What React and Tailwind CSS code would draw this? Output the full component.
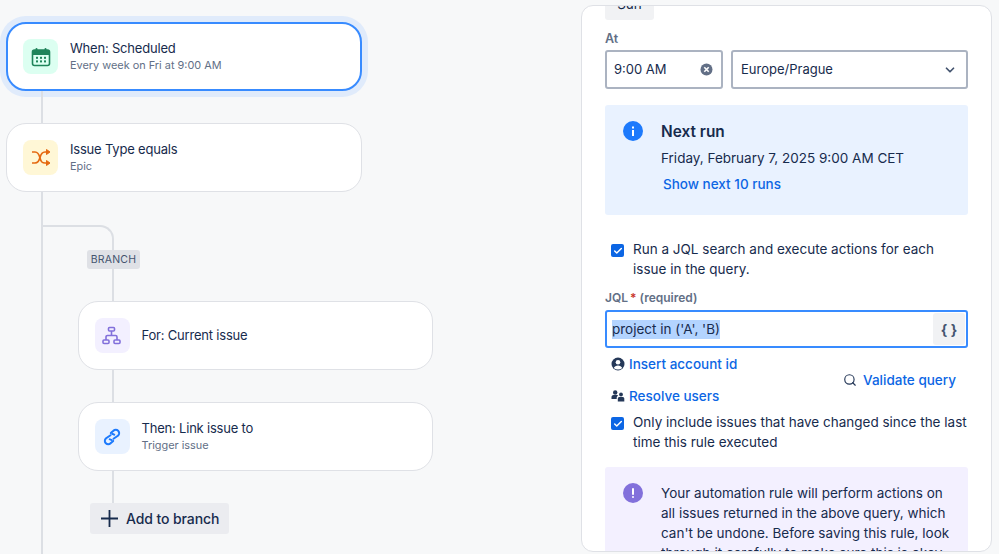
import { Check, ChevronDown, Search } from "lucide-react";

const CalendarIcon = () => (
  <svg width="20" height="20" viewBox="0 0 20 20" fill="none">
    <rect x="1.500" y="3" width="17" height="15.500" rx="2" stroke="#1f845a" strokeWidth="1.600" fill="none" />
    <path d="M1.500 5a2 2 0 0 1 2-2h13a2 2 0 0 1 2 2v3h-17z" fill="#1f845a" />
    <rect x="4.500" y="1" width="2" height="3" rx="1" fill="#1f845a" />
    <rect x="13.500" y="1" width="2" height="3" rx="1" fill="#1f845a" />
    {[5, 9, 13].map((x) => (
      <g key={x}>
        <rect x={x} y="9.800" width="2" height="2" fill="#1f845a" />
        <rect x={x} y="13.400" width="2" height="2" fill="#1f845a" />
      </g>
    ))}
  </svg>
);

const ShuffleIcon = () => (
  <svg width="20" height="20" viewBox="0 0 20 20" fill="none" stroke="#e56910" strokeWidth="1.700">
    <path d="M1 4h3c3 0 4 2 5 6s2 5 5 5h2" />
    <path d="M1 15h3c3 0 4-1.500 5-5.500s2-5.500 5-5.500h2" />
    <path d="M15.500 1.500 19 4l-3.500 2.500zM15.500 12.500 19 15l-3.500 2.500z" fill="#e56910" strokeWidth="1" />
  </svg>
);

const NetworkIcon = () => (
  <svg width="20" height="20" viewBox="0 0 20 20" fill="none" stroke="#8270db" strokeWidth="1.600">
    <rect x="6.500" y="1.500" width="6" height="3.500" rx="1" />
    <rect x="1" y="14" width="6" height="3.500" rx="1" />
    <rect x="12" y="14" width="6" height="3.500" rx="1" />
    <path d="M9.500 5v4.500M4 14v-3a1.500 1.500 0 0 1 1.500-1.500h8a1.500 1.500 0 0 1 1.500 1.500v3" />
  </svg>
);

const LinkIcon = () => (
  <svg width="20" height="20" viewBox="0 0 20 20" fill="none" stroke="#1d7afc" strokeWidth="2" strokeLinecap="round">
    <path d="M8.500 8.200 3.800 11.500a3.300 3.300 0 0 0 4.800 4.700l2.600-2.300" />
    <path d="M11.500 11.800l4.700-3.300a3.300 3.300 0 0 0-4.800-4.700L8.800 6.100" />
    <path d="M7.700 12.300a2.800 2.800 0 0 0 2 .6M12.300 7.700a2.800 2.800 0 0 0-2-.6" />
  </svg>
);

const UserIcon = () => (
  <svg width="14" height="14" viewBox="0 0 14 14">
    <circle cx="7" cy="7" r="6.500" fill="#253858" />
    <circle cx="7" cy="5.300" r="2.300" fill="#fff" />
    <path d="M2.800 11c.6-1.800 2.300-2.600 4.200-2.600s3.600.8 4.200 2.600A6 6 0 0 1 7 12.500 6 6 0 0 1 2.800 11z" fill="#fff" />
  </svg>
);

const UsersIcon = () => (
  <svg width="14" height="14" viewBox="0 0 14 14" fill="#253858">
    <circle cx="4.200" cy="3.500" r="2.200" />
    <circle cx="10" cy="5.500" r="1.900" />
    <path d="M.5 10V8c0-1.200 1-2 2-2h3.400c.6 0 1 .2 1.400.6C6.300 7 5.700 8 5.700 9v1z" />
    <path d="M6.800 12.500V9.800c0-1 .8-1.700 1.700-1.700h3c1 0 1.800.7 1.800 1.700v2.700z" />
  </svg>
);

const CheckBox = () => (
  <span className="flex h-[13px] w-[13px] shrink-0 items-center justify-center rounded-[2px] bg-[#0c66e4]">
    <Check size={10} strokeWidth={3.500} className="text-white" />
  </span>
);

const Card = ({ bg, icon, title, sub, active, className = "" }) => (
  <div
    className={`flex h-[69px] items-center gap-[12px] rounded-[20px] bg-white ${
      active ? "border-2 border-[#388bff] pl-[15px] shadow-[0_0_0_6px_#e0ebfb]" : "border border-[#dfe1e6] pl-[16px]"
    } ${className}`}
  >
    <div className={`flex h-[35px] w-[35px] items-center justify-center rounded-[8px] ${bg}`}>{icon}</div>
    <div className="mb-[2px]">
      <div className="text-[13px] leading-[18px] tracking-[-0.2px] text-[#172b4d]">{title}</div>
      {sub && <div className="text-[10.900px] leading-[16px] text-[#626f86]">{sub}</div>}
    </div>
  </div>
);

const Flow = () => (
  <div className="w-[581px] shrink-0 pl-[6px] pt-[22px]">
    <Card active className="w-[356px]" bg="bg-[#dcfff1]" icon={<CalendarIcon />} title="When: Scheduled" sub="Every week on Fri at 9:00 AM" />
    <div className="ml-[35px] h-[32px] w-[2px] bg-[#dcdfe4]" />
    <Card className="w-[356px]" bg="bg-[#fff7d6]" icon={<ShuffleIcon />} title="Issue Type equals" sub="Epic" />
    <div className="ml-[35px] h-[363px] border-l-2 border-[#dcdfe4] pt-[33px]">
      <div className="h-[25px] w-[71px] rounded-tr-[14px] border-r-2 border-t-2 border-[#dcdfe4]" />
      <div className="ml-[44px] flex h-[19px] w-[53px] items-center justify-center rounded-[3px] bg-[#dfe1e6] text-[10.500px] tracking-[0.2px] text-[#44546f]">
        BRANCH
      </div>
      <div className="ml-[69px] h-[32px] w-[2px] bg-[#dcdfe4]" />
      <Card className="ml-[34.500px] w-[355.500px]" bg="bg-[#f3f0ff]" icon={<NetworkIcon />} title="For: Current issue" />
      <div className="ml-[69px] h-[32px] w-[2px] bg-[#dcdfe4]" />
      <Card className="ml-[34.500px] w-[355.500px]" bg="bg-[#e9f2ff]" icon={<LinkIcon />} title="Then: Link issue to" sub="Trigger issue" />
      <div className="ml-[69px] h-[32px] w-[2px] bg-[#dcdfe4]" />
      <div className="ml-[47px] flex h-[31px] w-[139px] items-center gap-[8px] rounded-[3px] bg-[#ebecf0] pl-[11px] text-[14px] font-medium tracking-[-0.1px] text-[#172b4d]">
        <svg width="17" height="17" viewBox="0 0 17 17" stroke="#172b4d" strokeWidth="1.800">
          <path d="M8.500 0v17M0 8.500h17" />
        </svg>
        Add to branch
      </div>
    </div>
  </div>
);

const Panel = () => (
  <div className="mt-[5px] h-[547px] w-[411px] overflow-hidden rounded-[12px] border border-[#dfe1e6] bg-white px-[23px] text-[13.500px] text-[#172b4d]">
    <div className="-mt-[18px] flex h-[32px] w-[49px] items-center justify-center rounded-[3px] bg-[#f1f2f4]">Sun</div>
    <div className="mt-[11px] text-[12.500px] font-semibold leading-[16px] text-[#626f86]">At</div>
    <div className="mt-[3px] flex gap-[8px] text-[13px]">
      <div className="flex h-[39px] w-[118px] items-center justify-between rounded-[3px] border-2 border-[#abb3c1] pl-[7px] pr-[8px]">
        9:00 AM
        <svg width="13" height="13" viewBox="0 0 13 13">
          <circle cx="6.500" cy="6.500" r="6" fill="#626f86" />
          <path d="M4.300 4.300l4.400 4.400M8.700 4.300l-4.400 4.400" stroke="#fff" strokeWidth="1.600" />
        </svg>
      </div>
      <div className="flex h-[39px] w-[237px] items-center justify-between rounded-[3px] border-2 border-[#abb3c1] pl-[8px] pr-[9px]">
        Europe/Prague
        <ChevronDown size={14} strokeWidth={3} className="text-[#44546f]" />
      </div>
    </div>
    <div className="mt-[16px] flex h-[110px] w-[363px] rounded-[3px] bg-[#e9f2ff] pl-[18px] pt-[16px]">
      <svg width="20" height="20" viewBox="0 0 20 20" className="shrink-0">
        <circle cx="10" cy="10" r="10" fill="#1d7afc" />
        <rect x="9" y="9" width="2" height="6" fill="#fff" />
        <rect x="9" y="5.500" width="2" height="2" fill="#fff" />
      </svg>
      <div className="ml-[18px]">
        <div className="pt-[1px] text-[15.400px] font-semibold leading-[20px]">Next run</div>
        <div className="mt-[6px] leading-[20px]">Friday, February 7, 2025 9:00 AM CET</div>
        <div className="ml-[2px] mt-[6px] font-medium leading-[20px] text-[#0c66e4]">Show next 10 runs</div>
      </div>
    </div>
    <div className="mt-[24px] flex gap-[9px] pl-[6px]">
      <div className="pt-[5px]"><CheckBox /></div>
      <div className="leading-[20px]">Run a JQL search and execute actions for each<br />issue in the query.</div>
    </div>
    <div className="mt-[11px] text-[12px] font-semibold leading-[16px] text-[#626f86]">
      JQL<span className="ml-[2px] text-[#c9372c]">*</span> (required)
    </div>
    <div className="mt-[4px] flex h-[38px] w-[363px] items-center justify-between rounded-[3px] border-2 border-[#388bff] pl-[5px] pr-[1px]">
      <span className="bg-[#b3d4ff] leading-[19px]">project in ('A', 'B)</span>
      <span className="flex h-[32px] w-[32px] items-center justify-center rounded-[3px] bg-[#f1f2f4] text-[14px] font-bold text-[#44546f]">{"{ }"}</span>
    </div>
    <div className="flex justify-between pr-[12px] pt-[6px]">
      <div className="font-medium text-[#0c66e4]">
        <div className="flex h-[20px] items-center gap-[4px] pl-[6px]"><UserIcon />Insert account id</div>
        <div className="mt-[12px] flex h-[20px] items-center gap-[4px] pl-[6px]"><UsersIcon />Resolve users</div>
      </div>
      <div className="mt-[16px] flex h-[20px] items-center gap-[6px] font-medium text-[#0c66e4]">
        <Search size={14} strokeWidth={2} className="text-[#253858]" />
        Validate query
      </div>
    </div>
    <div className="mt-[6px] flex gap-[9px] pl-[6px]">
      <div className="pt-[5px]"><CheckBox /></div>
      <div className="leading-[20px]">Only include issues that have changed since the last<br />time this rule executed</div>
    </div>
    <div className="mt-[15px] flex h-[120px] w-[363px] rounded-[3px] bg-[#f3f0ff] pl-[18px] pt-[16px]">
      <svg width="20" height="20" viewBox="0 0 20 20" className="shrink-0">
        <circle cx="10" cy="10" r="10" fill="#8270db" />
        <rect x="9" y="5" width="2" height="7" rx="1" fill="#fff" />
        <rect x="9" y="13" width="2" height="2" rx="1" fill="#fff" />
      </svg>
      <div className="ml-[18px] w-[292px] leading-[20px]">
        Your automation rule will perform actions on all issues returned in the above query, which can't be undone. Before saving this rule, look through it carefully to make sure this is okay.
      </div>
    </div>
  </div>
);

export default function App() {
  return (
    <div className="flex h-[554px] w-[999px] overflow-hidden bg-[#f7f8f9] font-['Inter',sans-serif]">
      <Flow />
      <Panel />
    </div>
  );
}
